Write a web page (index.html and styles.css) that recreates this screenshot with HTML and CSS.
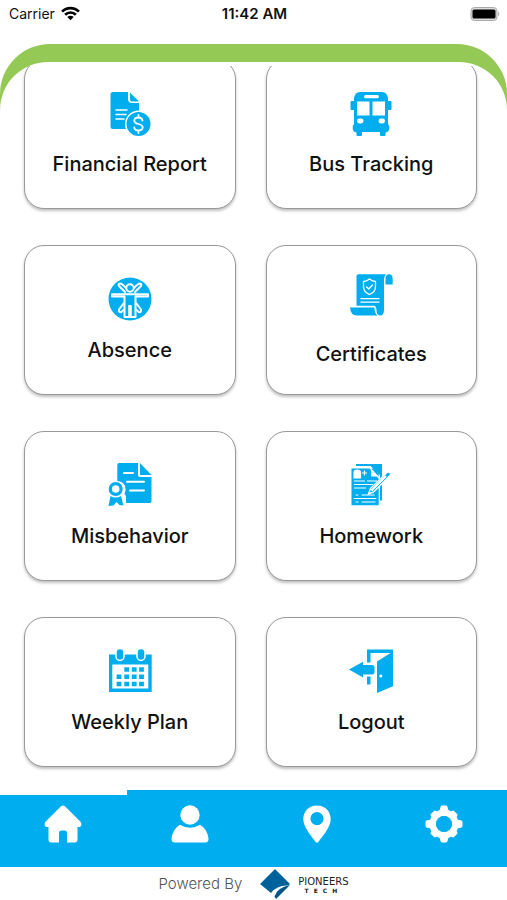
FILE: index.html
```html
<!DOCTYPE html>
<html lang="en">
<head>
    <meta charset="UTF-8">
    <meta name="viewport" content="width=device-width, initial-scale=1.0">
    <title>Home</title>
    <link rel="stylesheet" href="styles.css">
</head>
<body>
    <header class="status-bar">
        <div class="carrier">
            <span>Carrier</span>
            <svg class="wifi" viewBox="0 0 18 14">
                <path d="M1 5.2a11.3 11.3 0 0 1 16 0M3.9 8.2a7.2 7.2 0 0 1 10.2 0" fill="none" stroke="#000" stroke-width="2.5"/>
                <path d="M9 13.5l3-3.2a4.3 4.3 0 0 0-6 0z"/>
            </svg>
        </div>
        <span class="time">11:42 AM</span>
        <svg class="battery" viewBox="0 0 30 14">
            <rect x="1" y="0.500" width="26" height="13" rx="3.500" fill="#ddd" stroke="#aaa"/>
            <rect x="2.500" y="2.500" width="23" height="9" rx="1.500"/>
            <path d="M28.200 4.500q2.400 2.500 0 5z" fill="#aaa"/>
        </svg>
    </header>

    <div class="frame">
        <main class="panel">
            <div class="menu">
                <button type="button" class="card">
                    <svg class="icon" viewBox="0 0 44 44">
                        <path d="M5 1h15v7q0 4 4 4h7v26H5q-2.500 0-2.500-2.500v-32Q2.500 1 5 1z"/>
                        <path d="M22 1.500l9 9h-6.500q-2.500 0-2.500-2.500z"/>
                        <path class="line" d="M8 19h11M8 23.500h10M8 28h8" stroke-width="1.500"/>
                        <circle cx="30.500" cy="33" r="13.500" fill="#fff"/>
                        <circle cx="30.500" cy="33" r="12"/>
                        <path class="line" d="M34.500 29.500c-.5-2-2-3-4-3-2.500 0-4.200 1.300-4.200 3.200 0 4.300 8.400 2.300 8.400 6.600 0 2-1.700 3.200-4.200 3.200-2.300 0-4-1.200-4.300-3.200M30.500 24v2.500M30.500 39.500V42" stroke-width="1.800"/>
                    </svg>
                    <span class="label">Financial Report</span>
                </button>
                <button type="button" class="card">
                    <svg class="icon" viewBox="0 0 44 44">
                        <path d="M11 1h22q5 0 6 6v3h2.500q1 0 1 1v7q0 1-1 1H39v14q2 2 1 6-.5 2-3.500 2.500V44q0 1-1 1H32q-1 0-1-1v-3H13v3q0 1-1 1H8.500q-1 0-1-1v-2.500Q4.500 41 4 39q-1-4 1-6V19H2.500q-1 0-1-1v-7q0-1 1-1H5V7q1-6 6-6z"/>
                        <path d="M8 10.500h12.500v14H8zM23.500 10.500H36v14H23.500z" fill="#fff"/>
                        <rect x="15" y="4" width="15" height="3.200" rx="1.600" fill="#fff"/>
                        <rect x="8" y="27.500" width="6.500" height="5" rx="2.400" fill="#fff"/>
                        <rect x="29.500" y="27.500" width="6.500" height="5" rx="2.400" fill="#fff"/>
                    </svg>
                    <span class="label">Bus Tracking</span>
                </button>
                <button type="button" class="card">
                    <svg class="icon" viewBox="0 0 44 44">
                        <circle cx="22" cy="22" r="21.500"/>
                        <g fill="none" stroke="#fff" stroke-width="2" stroke-linejoin="round" stroke-linecap="round">
                            <circle cx="22" cy="11" r="3.700"/>
                            <path d="M4 17.200h36v2.300H27.500V40H22.800V29h-1.600v11h-4.700V19.500H4z"/>
                            <path d="M17 15l-6-6q-1-2 1-2.500 2 0 6 4.500M27 15l6-6q1-2-1-2.500-2 0-6 4.500"/>
                            <path d="M15.500 26.500l-4.500 6q-.5 3 2 2.800l2.500-2.300M28.500 26.500l4.500 6q.5 3-2 2.800L28.500 33"/>
                        </g>
                    </svg>
                    <span class="label">Absence</span>
                </button>
                <button type="button" class="card">
                    <svg class="icon icon-tall" viewBox="0 0 44 52">
                        <path d="M9.500 1.200H37q-2 1.800-2 5V37q0 5.500-4 5.500-3.500-.5-3.500-5 0-4.700-3-4.700H7.500v-29.500q0-2 2-2z"/>
                        <path d="M36.500 11.500V6q0-4.800 3.500-4.800 3.700 0 3.700 4.800v5.500zM1 34.500h24.500q0 6 3.200 8H8q-6.500 0-7-8z"/>
                        <path class="line" d="M20.500 6q3 2.500 6 2.500v5q0 5.500-6 8-6-2.500-6-8v-5q3 0 6-2.500zM17.700 14l2 2 3.800-4M12 25.700h18M12 29.200h18" stroke-width="1.300"/>
                    </svg>
                    <span class="label">Certificates</span>
                </button>
                <button type="button" class="card">
                    <svg class="icon" viewBox="0 0 44 44">
                        <path d="M11 0h19v12q0 2 2 2h11.500v24q0 2-2 2H18V33l-1.500-2q2-4 .5-8-2-4.500-7.700-5V2q0-2 1.700-2z"/>
                        <path d="M32 0l11.500 12H32z"/>
                        <path class="line" d="M16 10h9M19 18.700h17M22 27.500h14" stroke-width="2"/>
                        <circle cx="7.700" cy="26" r="5.400" fill="#fff" stroke="#00aeef" stroke-width="3.200"/>
                        <path d="M2.500 33q5 3 10.500 0l2.500 9.500-4-.5-3-3-3 3.500-5 .5z"/>
                    </svg>
                    <span class="label">Misbehavior</span>
                </button>
                <button type="button" class="card">
                    <svg class="icon" viewBox="0 0 44 44">
                        <path d="M7 1h26v36.500h-2V12L22 3H7z"/>
                        <path d="M2.500 5.500h27.200v36.800H2.500z"/>
                        <path d="M20 1.500h12v11z"/>
                        <path d="M5 15V9.500Q5 7 8.200 7t3.300 2.500V15zM13 10h5M15.500 7.500v5M21 5l9 10M5 18h11M18 18h10M5 21.500h19M5 25h12" fill="#fff" stroke="#fff" stroke-width="1.200"/>
                        <path d="M22 6l7.500 7.500H22z" fill="#fff"/>
                        <path class="line" d="M7 32h2M13 32h12M5 35.500h22M7 39h2M13 39h13" stroke-width="1.100"/>
                        <path d="M19.500 31l2-5.500L38 9.500q2-1 3.200.3 1 1.200-.2 2.700L24.700 29z" stroke="#fff" stroke-width="1.400"/>
                        <path d="M22.500 27.500L37 13" stroke="#fff" stroke-width="2.200"/>
                    </svg>
                    <span class="label">Homework</span>
                </button>
                <button type="button" class="card">
                    <svg class="icon" viewBox="0 0 44 44">
                        <path d="M1 5.500h42.700V43H1z"/>
                        <path d="M4.300 15.500h36v24h-36z" fill="#fff"/>
                        <rect x="8" y="-.5" width="8" height="12" rx="4" stroke="#fff" stroke-width="1.500"/>
                        <rect x="29" y="-.5" width="8" height="12" rx="4" stroke="#fff" stroke-width="1.500"/>
                        <path d="M18.700 18.300v4.500M26.200 18.300v4.500M33.500 18.300v4.500M11 25.500V30M18.700 25.500V30M26.200 25.500V30M33.500 25.500V30M11 32.700v4.500M18.700 32.700v4.500M26.200 32.700v4.500M33.500 32.700v4.500" stroke="#00aeef" stroke-width="4.800"/>
                    </svg>
                    <span class="label">Weekly Plan</span>
                </button>
                <button type="button" class="card">
                    <svg class="icon" viewBox="0 0 44 44">
                        <path d="M18 .5h26V4H21.500v9.500H18zM18 27.500h3.500v8H18z"/>
                        <path d="M28 12.500L44 2.500v34.700L28 44z"/>
                        <path d="M0 20.500L14 12.800V16h9q2.500 0 2.500 2v5.500q0 2-2.500 2h-9v3z"/>
                        <circle cx="31.800" cy="27" r="1.500" fill="#fff"/>
                    </svg>
                    <span class="label">Logout</span>
                </button>
            </div>
        </main>
    </div>

    <nav class="tabs">
        <a href="#" class="tab active" aria-label="Home">
            <svg class="tab-icon" viewBox="0 0 38 38">
                <path d="M17 1.200q2-1.600 4 0l15.500 15.500q2 2.800-.5 5.300h-2.500v12.500q0 3-3 3H23V28q0-2.500-2-2.500h-4q-2 0-2 2.500v9.500H7.500q-3 0-3-3V22H2q-2.500-2.500-.5-5.300z"/>
            </svg>
        </a>
        <a href="#" class="tab" aria-label="Profile">
            <svg class="tab-icon" viewBox="0 0 38 38">
                <circle cx="19" cy="10" r="9.700"/>
                <path d="M9 19.700q10 6 20 0 7 4 8.500 13.500.3 4.300-3.500 4.300H4q-3.800 0-3.500-4.300Q2 23.700 9 19.700z"/>
            </svg>
        </a>
        <a href="#" class="tab" aria-label="Location">
            <svg class="tab-icon" viewBox="0 0 38 38">
                <path fill-rule="evenodd" d="M19 .5c7.800 0 13.700 5.800 13.700 13.500 0 7.500-6 14.500-12.200 22.700q-1.500 1.700-3 0C11.300 28.500 5.300 21.500 5.300 14 5.300 6.300 11.200.5 19 .5zm0 6.500a6.600 6.600 0 1 0 0 13.200A6.600 6.600 0 0 0 19 7z"/>
            </svg>
        </a>
        <a href="#" class="tab" aria-label="Settings">
            <svg class="tab-icon" viewBox="0 0 38 38">
                <path d="M17 2h4l1.500 6h-7zM17 36h4l1.500-6h-7zM2 17v4l6 1.500v-7zM36 17v4l-6 1.500v-7zM7 10l3-3 5 3-5 5zM31 10l-3-3-5 3 5 5zM7 28l3 3 5-3-5-5zM31 28l-3 3-5-3 5-5z" stroke="#fff" stroke-width="3" stroke-linejoin="round"/>
                <circle cx="19" cy="19" r="11.200" fill="none" stroke="#fff" stroke-width="6.500"/>
                <circle cx="19" cy="19" r="8" fill="#00aeef"/>
            </svg>
        </a>
    </nav>

    <footer class="footer">
        <span class="powered">Powered By</span>
        <svg class="logo" viewBox="0 0 32 32">
            <path d="M16 1L31 16l-2 1.500Q18 17 12 25L1 16z" fill="#00629b"/>
            <path d="M31 17L17 31l-1.500-2.500Q18 19.500 31 17z" fill="#00558a"/>
        </svg>
        <span class="brand">
            <span class="brand-name">PIONEERS</span>
            <span class="brand-sub">TECH</span>
        </span>
    </footer>
</body>
</html>
```
FILE: styles.css
```css
* {
    box-sizing: border-box;
}
body {
    margin: 0;
    min-height: 100vh;
    display: flex;
    flex-direction: column;
    background-color: #fff;
    color: #111;
    font-family: Inter, "Liberation Sans", sans-serif;
}
.status-bar {
    display: grid;
    grid-template-columns: 1fr auto 1fr;
    align-items: center;
    height: 27px;
    margin-bottom: 17px;
    padding: 0 7px 0 9px;
    font-size: 14px;
}
.carrier {
    display: flex;
    align-items: center;
    gap: 6px;
}
.wifi {
    width: 19px;
    height: 15px;
}
.time {
    font-size: 15px;
    font-weight: 600;
}
.battery {
    width: 30px;
    height: 14px;
    justify-self: end;
}
.frame {
    flex: 1;
    display: flex;
    flex-direction: column;
    padding-top: 18px;
    border-radius: 50px 50px 0 0;
    background: linear-gradient(#95c956 100px, #fff 100px);
}
.panel {
    flex: 1;
    padding-top: 4px;
    border-radius: 48px 48px 0 0;
    background-color: #fff;
}
/* list is scrolled a little, so the first row is cut off */
.menu {
    display: grid;
    grid-template-columns: 1fr 1fr;
    gap: 36px 30px;
    margin-top: -7px;
    padding: 0 30px 23px 24px;
    clip-path: inset(7px 0 0 0);
}
.card {
    display: flex;
    flex-direction: column;
    align-items: center;
    justify-content: center;
    gap: 17px;
    height: 150px;
    padding: 0 0 1px;
    border: 1px solid #999;
    border-radius: 20px;
    background-color: #fff;
    box-shadow: 0 2px 3px rgba(0, 0, 0, 0.25);
    color: #111;
    font-family: inherit;
    cursor: pointer;
}
.icon {
    width: 44px;
    height: 44px;
    fill: #00aeef;
    overflow: visible;
}
.icon-tall {
    height: 52px;
}
.line {
    fill: none;
    stroke: #fff;
    stroke-linecap: round;
    stroke-linejoin: round;
}
.label {
    font-size: 20px;
    font-weight: 500;
    line-height: 24px;
}
.tabs {
    display: grid;
    grid-template-columns: repeat(4, 1fr);
    height: 77px;
    background-color: #00aeef;
}
.tab {
    display: flex;
    justify-content: center;
    padding-top: 15px;
    border-top: 0 solid #fff;
}
.tab.active {
    padding-top: 10px;
    border-top-width: 5px;
}
.tab-icon {
    width: 38px;
    height: 38px;
    fill: #fff;
}
.footer {
    display: flex;
    align-items: center;
    justify-content: center;
    height: 33px;
}
.powered {
    margin-right: 17px;
    color: #555;
    font-size: 15px;
    font-weight: 300;
    line-height: 20px;
}
.logo {
    width: 32px;
    height: 32px;
    margin-right: 7px;
}
.brand {
    display: flex;
    flex-direction: column;
    align-items: center;
    padding-top: 4px;
    color: #222;
    font-family: "DejaVu Sans", sans-serif;
}
.brand-name {
    font-size: 10px;
    line-height: 10px;
}
.brand-sub {
    font-size: 6px;
    font-weight: bold;
    line-height: 7px;
    letter-spacing: 5px;
}
```
